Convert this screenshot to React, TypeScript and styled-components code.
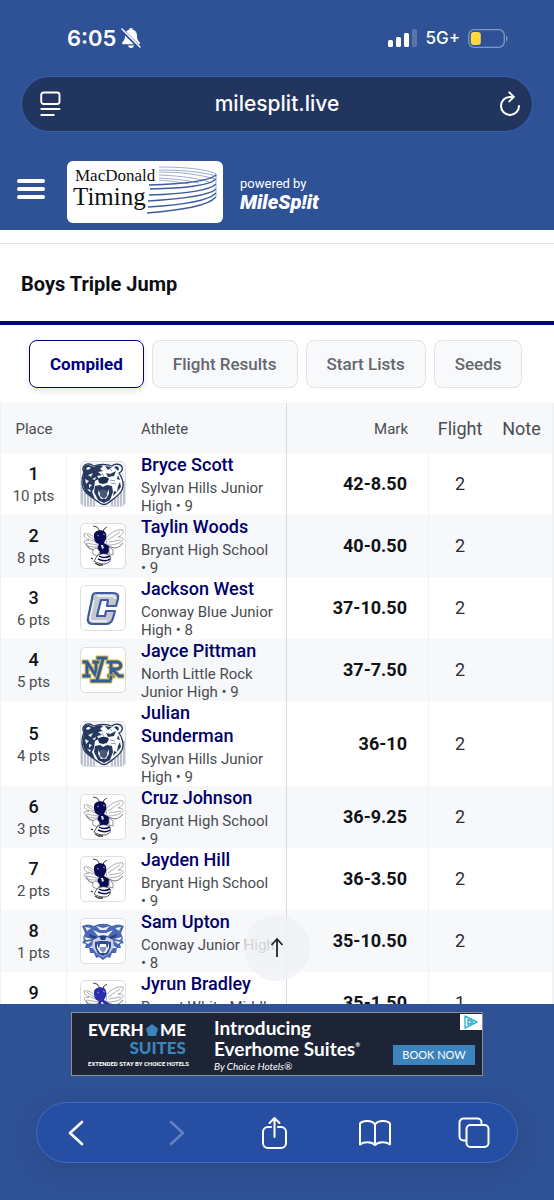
import React from "react";
import styled, { createGlobalStyle, css } from "styled-components";

const GlobalStyle = createGlobalStyle`
  *, *::before, *::after { box-sizing: border-box; }
  body { margin: 0; background: #2f5196; font-family: Roboto, "Liberation Sans", sans-serif; }
  button { font: inherit; padding: 0; border: 0; background: none; color: inherit; cursor: pointer; }
  svg { display: block; }
`;

const Screen = styled.div`
  display: flex;
  flex-direction: column;
  height: 100vh;
  background: #2f5196;
`;

/* ---------- status bar and address bar ---------- */

const StatusBar = styled.div`
  display: flex;
  align-items: center;
  justify-content: space-between;
  flex: none;
  height: 77px;
  padding: 0 46px 1px 67px;
  color: #fff;
  font-family: Inter, "Liberation Sans", sans-serif;
`;

const StatusGroup = styled.div<{ $gap: number }>`
  display: flex;
  align-items: center;
  gap: ${(p) => p.$gap}px;
`;

const Clock = styled.time`
  font-size: 22px;
  line-height: 28px;
  font-weight: 600;
`;

const Network = styled.span`
  font-size: 17px;
  line-height: 24px;
  font-weight: 500;
`;

const AddressBar = styled.div`
  display: flex;
  align-items: center;
  flex: none;
  height: 54px;
  margin: 0 22px;
  border-radius: 27px;
  background: #22355f;
  box-shadow: 0 0 0 1px #3560ae;
  color: #fff;
  font-family: Inter, "Liberation Sans", sans-serif;
`;

const AddressButton = styled.button<{ $end?: boolean }>`
  display: flex;
  align-items: center;
  justify-content: ${(p) => (p.$end ? "flex-end" : "flex-start")};
  width: 60px;
  height: 100%;
  padding: 0 11px 0 18px;
`;

const Address = styled.span`
  flex: 1;
  font-size: 21px;
  line-height: 28px;
  font-weight: 500;
  text-align: center;
`;

/* ---------- site header ---------- */

const SiteHeader = styled.header`
  display: flex;
  align-items: center;
  flex: none;
  height: 99px;
  padding: 22px 17px 0;
  color: #fff;
`;

const MenuButton = styled.button`
  display: flex;
  flex-direction: column;
  gap: 4px;
  width: 28px;
  margin-right: 22px;
  margin-bottom: 6px;
`;

const MenuLine = styled.span`
  height: 4px;
  border-radius: 2px;
  background: #fff;
`;

const TimingLogo = styled.a`
  display: block;
  width: 156px;
  height: 62px;
  border-radius: 6px;
  background: #fff;
`;

const Powered = styled.div`
  display: flex;
  flex-direction: column;
  margin-left: 17px;
  padding-top: 6px;
  font-size: 13px;
  line-height: 15px;
`;

const MileSplit = styled.span`
  font-size: 20px;
  line-height: 22px;
  font-weight: 900;
  font-style: italic;
`;

/* ---------- results ---------- */

const Frame = styled.div`
  position: relative;
  flex: 1;
  min-height: 0;
  display: flex;
`;

const Content = styled.main`
  flex: 1;
  overflow-y: auto;
  scrollbar-width: none;
  background: #fff;
`;

const TitleBar = styled.div`
  margin-top: 13px;
  padding: 28px 21px 24px;
  border-top: 1px solid #e2e3e6;
  border-bottom: 4px solid #000080;
`;

const Title = styled.h1`
  margin: 0;
  font-size: 20px;
  line-height: 25px;
  font-weight: 700;
  color: #0d0e12;
`;

const Tabs = styled.nav`
  display: flex;
  gap: 8px;
  padding: 15px 29px;
`;

const Tab = styled.button<{ $active?: boolean }>`
  height: 48px;
  padding: 0 20px;
  border: 1px solid #e1e3e7;
  border-radius: 8px;
  background: #f8f9fb;
  color: #65676d;
  font-size: 17px;
  line-height: 24px;
  font-weight: 500;
  white-space: nowrap;
  ${(p) =>
    p.$active &&
    css`
      border-color: #000080;
      background: #fff;
      color: #000080;
      font-weight: 700;
      box-shadow: 0 3px 6px rgba(0, 0, 60, 0.1);
    `}
`;

const Table = styled.table`
  width: 100%;
  table-layout: fixed;
  border-collapse: separate;
  border-spacing: 0;
  border-left: 1px solid #f0f1f3;
  border-right: 2px solid #f1f2f4;
  color: #4a4c51;
`;

const Col = styled.col<{ $width?: number }>`
  width: ${(p) => (p.$width ? `${p.$width}px` : "auto")};
`;

const HeadCell = styled.th<{ $align?: string; $large?: boolean }>`
  height: 50px;
  padding: 2px 0 0;
  background: #f7f8fa;
  font-size: ${(p) => (p.$large ? 18 : 15)}px;
  line-height: 20px;
  font-weight: 400;
  text-align: ${(p) => p.$align ?? "center"};
`;

const AthleteHead = styled(HeadCell)`
  padding-left: 74px;
  border-right: 1px solid #d9dadd;
`;

const MarkHead = styled(HeadCell)`
  padding-right: 21px;
`;

const Row = styled.tr`
  &:nth-child(even) { background: #f7f8fa; }
`;

const Cell = styled.td`
  padding: 0;
  border-right: 1px solid #f0f1f3;
  text-align: center;
  font-size: 18px;
  line-height: 22px;

  &:nth-child(n + 4) { border-right: 0; }
`;

const PlaceCell = styled(Cell)`
  padding-top: 2px;
`;

const Place = styled.strong`
  display: block;
  color: #111216;
  font-size: 18px;
  font-weight: 500;
`;

const Points = styled.span`
  display: block;
  font-size: 15px;
`;

const AthleteCell = styled(Cell)`
  padding: 0 8px 0 13px;
  border-right-color: #d9dadd;
  text-align: left;
`;

const Athlete = styled.div`
  display: flex;
  align-items: center;
  gap: 15px;
`;

const Badge = styled.span`
  flex: none;
  width: 46px;
  height: 46px;
  border: 1px solid #dedfe3;
  border-radius: 5px;
  background: #fff;
  overflow: hidden;
`;

const Name = styled.a`
  display: block;
  margin-bottom: 3px;
  color: #000069;
  font-size: 18px;
  line-height: 23px;
  font-weight: 500;
  text-decoration: none;
`;

const School = styled.div`
  font-size: 15px;
  line-height: 18px;
`;

const MarkCell = styled(Cell)`
  padding-right: 21px;
  color: #111216;
  font-weight: 700;
  text-align: right;
`;

const FlightCell = styled(Cell)`
  color: #2b2d31;
`;

const ToTop = styled.button`
  position: absolute;
  bottom: 23px;
  left: 50%;
  display: grid;
  place-items: center;
  width: 66px;
  height: 66px;
  margin-left: -33px;
  border-radius: 50%;
  background: rgba(240, 241, 247, 0.82);
`;

/* ---------- advert and browser toolbar ---------- */

const Footer = styled.footer`
  flex: none;
  padding: 8px 0 37px;
`;

const Advert = styled.aside`
  position: relative;
  display: flex;
  width: 412px;
  height: 64px;
  margin: 0 auto 26px;
  padding: 4px 7px 2px 16px;
  border: 1px solid #8d8f93;
  background: #1d2436;
  color: #fff;
  font-family: Lato, "Liberation Sans", sans-serif;
`;

const Brand = styled.div`
  display: flex;
  flex-direction: column;
  width: 98px;
  margin-right: 28px;
  padding-top: 4px;
`;

const BrandName = styled.span`
  display: flex;
  align-items: center;
  justify-content: space-between;
  font-size: 17px;
  line-height: 18px;
  font-weight: 900;
`;

const BrandSuites = styled.span`
  color: #3c84bd;
  font-size: 17px;
  line-height: 17px;
  font-weight: 900;
  text-align: right;
`;

const BrandNote = styled.span`
  margin-top: 3px;
  font-family: Roboto, "Liberation Sans", sans-serif;
  font-size: 6px;
  line-height: 10px;
  font-weight: 700;
  white-space: nowrap;
`;

const AdCopy = styled.div`
  flex: 1;
  font-size: 19px;
  line-height: 21px;
  font-weight: 700;
  white-space: nowrap;
`;

const Reg = styled.small`
  font-size: 6px;
  line-height: 14px;
  vertical-align: top;
`;

const Byline = styled.div`
  font-size: 10px;
  line-height: 14px;
  font-style: italic;
  font-weight: 400;
`;

const BookNow = styled.button`
  align-self: flex-end;
  width: 82px;
  height: 20px;
  margin-bottom: 8px;
  background: #3c84bd;
  font-size: 11px;
  line-height: 20px;
`;

const AdChoices = styled.a`
  position: absolute;
  top: 1px;
  right: 0;
  display: grid;
  place-items: center;
  width: 22px;
  height: 16px;
  background: #fff;
`;

const Toolbar = styled.nav`
  display: flex;
  align-items: center;
  justify-content: space-between;
  height: 61px;
  margin: 0 36px;
  padding: 0 25px 0 21px;
  border: 1px solid #3c6dc4;
  border-radius: 31px;
  background: #264fa4;
  box-shadow: 0 6px 20px rgba(40, 60, 100, 0.35);
  color: #fff;
`;

const ToolButton = styled.button`
  display: grid;
  place-items: center;
  width: 36px;
  height: 44px;

  &:disabled { color: #6583c0; }
`;

/* ---------- school badges ---------- */

const Bear = () => (
  <svg width="44" height="44" viewBox="1 1 44 44" aria-label="Sylvan Hills bear">
    <rect x="1" y="1" width="44" height="44" fill="#f3f5f8" />
    <path
      d="M2 20v26M5 27v19M8 31v15M11 36v10M14 39v7M32 39v7M35 36v10M38 31v15M41 27v19M44 20v26"
      stroke="#a5acbd"
      strokeWidth="1.400"
    />
    <path
      d="M4 11C1 7 5 2 9 3c2 0 3 1 5 2 5-2 13-2 18 0 3-3 9-2 10 1 1 3-1 5-3 6 4 6 5 12 3 17-3 6-9 9-14 13-2 2-6 2-8 0C14 38 7 34 4 29 1 23 2 16 4 11z"
      fill="#fff"
      stroke="#27395f"
      strokeWidth="1.300"
    />
    <path
      d="M4 11C2 7 5 3 9 4l5 2c3-2 7-2 9-1l-3 3 3 2-5 1 4 3-5 1 2 3-4 2-1 7-2 4 3 7C10 35 5 32 4 27c-2-5-1-11 0-16z"
      fill="#27395f"
    />
    <path d="M6 8c1-3 4-2 5-1L8 9zM8 14l5-2-2 4zM5 18l4 2-3 3zM9 23l3 1-3 3zM12 18l4-2-1 3zM7 28l4 1-1 2z" fill="#eef1f6" />
    <path d="M25 5l7 1-4 3zM34 6c4-2 6 1 4 4zM26 12l4 1 6-3-2 5-6 1zM38 14l2 5-3-1zM40 21l1 5-4 5 1-6zM37 31l-4 4 1-5z" fill="#27395f" />
    <path d="M18 18c3-3 9-3 11 0l-2 4-4 1-4-1z" fill="#1d2d52" />
    <path d="M15 25l5-1 3 2 4-2 5 1 1 6-3 8-6 3-6-3-4-8z" fill="#27395f" />
    <path d="M18 28l1 4 1-2h6l1 2 2-4 0 5-3 5h-5l-3-5z" fill="#dfe4ed" />
    <path d="M20 30c1-2 6-2 7 0v5l-3 3-4-3z" fill="#4a5878" />
    <path d="M30 19l5 1M31 22l5 1M30 8l2 2M22 12l2 4" stroke="#7f8ba4" strokeWidth="0.900" />
  </svg>
);

const Hornet = ({ body = "#0a0a55" }: { body?: string }) => (
  <svg width="44" height="44" viewBox="1 1 44 44" aria-label="Bryant hornet">
    <g fill="#fff" stroke="#8b8d91" strokeWidth="0.700">
      <path d="M17 18C13 12 8 10 4 11c0 3 2 5 5 6-2 1-5 0-5 2 3 5 9 6 15 4z" />
      <path d="M8 16l10 4M7 12l10 7M6 20l12 2" />
      <path d="M26 15c5-6 12-9 17-8 1 3-2 6-5 7 3 0 6 1 5 3-3 4-10 5-16 5z" />
      <path d="M28 17l12-8M29 19l12-2" />
      <path d="M6 21c3 6 9 7 13 4M29 23c5 3 10 2 14-3" fill="none" strokeWidth="1.200" />
    </g>
    <path d="M13 3l4 1 3 4M27 4l-3 2-1 3" fill="none" stroke="#303033" strokeWidth="0.900" />
    <path d="M14 12c0-4 6-6 10-4 3 2 3 7 1 10l-1 2 5 3 1 5-4 4-6-1-3-5 2-5c-4-1-5-4-5-9z" fill={body} />
    <path d="M17 12l2 1M23 11l2 1" stroke="#9da1c6" strokeWidth="0.900" />
    <path d="M21 22l2 0 1 3-2 1z" fill="#dfe2f0" />
    <path d="M17 25c-4 0-5 3-4 6l4 2 3-4zM29 24l4 3v5l-4-1z" fill="#fff" stroke="#76787d" strokeWidth="0.800" />
    <path d="M17 33c3-3 10-3 13 0 1 4 0 7-5 8-5 0-8-1-11-3z" fill="#fff" stroke="#303033" strokeWidth="0.800" />
    <path d="M19 33c3 2 7 2 11 0M18 36c4 2 9 2 12 0" fill="none" stroke={body} strokeWidth="1.500" />
    <path d="M13 36l-2-1M15 40l4 2h4" fill="none" stroke="#303033" strokeWidth="1.300" />
  </svg>
);

const BlockC = () => (
  <svg width="44" height="44" viewBox="1 1 44 44" aria-label="Conway C">
    <path
      d="M16 8h17c4 0 6 2 5 6l-2 7h-9l1-6h-7l-4 16h8l1-5h9l-2 7c-1 4-3 6-7 6H13c-4 0-6-2-5-6l4-19c0-3 1-6 4-6z"
      fill="#c4c8cd"
      stroke="#3d5ba5"
      strokeWidth="2.200"
      strokeLinejoin="round"
    />
    <path d="M17 11h15c2 0 3 1 3 3M14 15l-4 18c0 2 1 3 3 3h14" fill="none" stroke="#f4f5f7" strokeWidth="1.300" />
  </svg>
);

const monogramStrokes = [
  { color: "#dcb548", width: 4.8 },
  { color: "#2f5f9a", width: 2.8 },
];

const monogramLetters = [
  "M4 15h3l9 14V16M4 29h5M7 16v12M14 15h4M31 16v13M28 15h9c5 0 5 7 0 7h-5l7 7h3M29 29h4",
  "M18 11h8M23 12l-6 21M12 34h18l1-4",
];

const Monogram = () => (
  <svg width="44" height="44" viewBox="1 1 44 44" aria-label="North Little Rock monogram">
    {monogramLetters.map((d) =>
      monogramStrokes.map((s) => (
        <path key={d + s.color} d={d} fill="none" stroke={s.color} strokeWidth={s.width} strokeLinecap="square" />
      ))
    )}
  </svg>
);

const Wildcat = () => (
  <svg width="44" height="44" viewBox="1 1 44 44" aria-label="Conway wildcat">
    <path
      d="M2 8c4-2 8-2 12 0 5-3 13-3 18 0 4-2 8-2 12 0l-3 7 2 5-1 2 2 3-4 1 1 4-4 0-1 5-4 0-2 5-3-1-4 3-4-3-3 1-2-5-4 0-1-5-4 0 1-4-4-1 2-3-1-2 2-5z"
      fill="#4a68b4"
    />
    <path d="M5 9l6 1-4 3zM41 9l-6 1 4 3zM16 8l7 2 7-2-4 4h-6zM13 12l7 3h6l7-3-5 6-5-1-5 1z" fill="#e9edf6" />
    <path d="M9 16l8 3-2 2-5-2zM37 16l-8 3 2 2 5-2z" fill="#263f87" />
    <path d="M4 19l8 2-6 1zM42 19l-8 2 6 1zM5 24l7-1-4 3zM41 24l-7-1 4 3zM9 30l4-3v3zM37 30l-4-3v3z" fill="#fff" />
    <path d="M13 22l6-3h8l6 3 1 7-5 7-6 3-6-3-5-7z" fill="#c9cfde" />
    <path d="M19 18h8l-2 4h-4z" fill="#263f87" />
    <path d="M15 24l5-1h6l5 1v5l-3 7-5 2-5-2-3-7z" fill="#2e489b" />
    <path d="M17 25l2 6 1-5h6l1 5 2-6v5l-3 5h-6l-3-5z" fill="#fff" />
    <path d="M20 29h6v3l-3 3-3-3z" fill="#7f91c6" />
  </svg>
);

/* ---------- page icons ---------- */

const BellOff = () => (
  <svg width="20" height="22" viewBox="0 0 20 22" aria-label="Silent">
    <path
      d="M10 1c-1 0-1.600.6-1.700 1.400C5.400 3.200 4 5.600 4 8.500c0 4-1.200 5.300-2.500 6.600-.9.900-.5 2.100.6 2.100h15.800c1.100 0 1.500-1.200.6-2.100C17.200 13.800 16 12.500 16 8.500c0-2.900-1.400-5.300-4.300-6.100C11.600 1.600 11 1 10 1z"
      fill="#fff"
    />
    <path d="M7 18.500h6c-.4 1.700-1.500 2.500-3 2.500s-2.600-.8-3-2.500z" fill="#fff" />
    <path d="M0 2l19 19" stroke="#2f5196" strokeWidth="3.600" />
    <path d="M1 2l18 18" stroke="#fff" strokeWidth="1.500" strokeLinecap="round" />
  </svg>
);

const Signal = () => (
  <svg width="29" height="18" viewBox="0 0 29 18" aria-label="Signal">
    <rect x="0" y="11" width="5" height="7" rx="1.500" fill="#fff" />
    <rect x="8" y="8" width="5" height="10" rx="1.500" fill="#fff" />
    <rect x="16" y="4" width="5" height="14" rx="1.500" fill="#fff" />
    <rect x="24" y="0" width="5" height="18" rx="1.500" fill="#5874ab" />
  </svg>
);

const Battery = () => (
  <svg width="40" height="19" viewBox="0 0 40 19" aria-label="Battery low">
    <rect x="0.700" y="0.700" width="35.600" height="17.600" rx="5.500" fill="none" stroke="#8197c2" strokeWidth="1.300" />
    <rect x="2.800" y="3" width="10" height="13" rx="3" fill="#fdd840" />
    <path d="M38 6.500c2 .8 2 5.200 0 6z" fill="#8197c2" />
  </svg>
);

const ReaderIcon = () => (
  <svg width="21" height="26" viewBox="0 0 21 26" fill="none" stroke="#fff" strokeWidth="1.900" strokeLinecap="round">
    <rect x="1.200" y="1.500" width="18.300" height="11.500" rx="2.500" />
    <path d="M1.300 18h18.200M1.300 24h12.500" />
  </svg>
);

const ReloadIcon = () => (
  <svg width="22" height="26" viewBox="0 0 22 26" fill="none" stroke="#fff" strokeWidth="2" strokeLinecap="round" strokeLinejoin="round">
    <path d="M14.500 5.900H11a9 9 0 1 0 9 9" />
    <path d="M10.300 1.400l4.500 4.500-4.500 4.500" />
  </svg>
);

const tool = {
  fill: "none",
  stroke: "currentColor",
  strokeWidth: 2,
  strokeLinecap: "round" as const,
  strokeLinejoin: "round" as const,
};

const BackIcon = () => (
  <svg width="18" height="26" viewBox="0 0 18 26" {...tool} strokeWidth={2.6}>
    <path d="M15 2L3 13l12 11" />
  </svg>
);

const ForwardIcon = () => (
  <svg width="18" height="26" viewBox="0 0 18 26" {...tool} strokeWidth={2.4}>
    <path d="M4 2l12 11L4 24" />
  </svg>
);

const ShareIcon = () => (
  <svg width="28" height="34" viewBox="0 0 28 34" {...tool}>
    <path d="M10 11H7a5 5 0 0 0-5 5v11a5 5 0 0 0 5 5h13a5 5 0 0 0 5-5V16a5 5 0 0 0-5-5h-3M13.500 21V2M8.500 7l5-5 5 5" />
  </svg>
);

const BookIcon = () => (
  <svg width="34" height="28" viewBox="0 0 34 28" {...tool}>
    <path d="M17 5.500C14 1 5 1 2 4.500v21c4-3 11.500-3 15 .5 3.500-3.500 11-3.500 15-.5v-21C29 1 20 1 17 5.500zV26" />
  </svg>
);

const TabsIcon = () => (
  <svg width="32" height="32" viewBox="0 0 32 32" {...tool}>
    <path d="M7.500 23.500H5.500a4 4 0 0 1-4-4v-14a4 4 0 0 1 4-4h14a4 4 0 0 1 4 4v2" />
    <rect x="8.500" y="8" width="22" height="22" rx="4" />
  </svg>
);

const TimingMark = () => (
  <svg width="156" height="62" viewBox="0 0 156 62" aria-label="MacDonald Timing">
    <g fill="#111" fontFamily='"Liberation Serif", serif'>
      <text x="8" y="20" fontSize="17">MacDonald</text>
      <text x="6" y="44" fontSize="25">Timing</text>
    </g>
    <g fill="none" stroke="#5a76b4" strokeWidth="0.600">
      <path d="M92 6c24 0 48 2 57 7v3M92 9c24 0 44 2 57 6M92 11c24 0 42 3 56 7M92 14c22 1 38 3 50 7M92 17c14 1 28 2 40 5M92 19c12 1 20 2 30 4" />
      <path d="M149 13v23" />
    </g>
    <g fill="none" stroke="#3c5c9f" strokeWidth="1.300">
      <path d="M82 24c34-1 60-4 67-10" />
      <path d="M83 28c34-1 59-3 66-10" />
      <path d="M82 34c34-1 60-4 67-11" />
      <path d="M81 40c34-2 61-5 68-12" />
      <path d="M81 46c34-2 61-6 68-14" />
      <path d="M80 52c35-3 61-7 69-16" />
    </g>
  </svg>
);

/* ---------- data ---------- */

const tabs = ["Compiled", "Flight Results", "Start Lists", "Seeds"];

const results = [
  { pts: 10, name: "Bryce Scott", school: "Sylvan Hills Junior High", grade: 9, mark: "42-8.50", flight: 2, badge: <Bear /> },
  { pts: 8, name: "Taylin Woods", school: "Bryant High School", grade: 9, mark: "40-0.50", flight: 2, badge: <Hornet /> },
  { pts: 6, name: "Jackson West", school: "Conway Blue Junior High", grade: 8, mark: "37-10.50", flight: 2, badge: <BlockC /> },
  { pts: 5, name: "Jayce Pittman", school: "North Little Rock Junior High", grade: 9, mark: "37-7.50", flight: 2, badge: <Monogram /> },
  { pts: 4, name: "Julian Sunderman", school: "Sylvan Hills Junior High", grade: 9, mark: "36-10", flight: 2, badge: <Bear /> },
  { pts: 3, name: "Cruz Johnson", school: "Bryant High School", grade: 9, mark: "36-9.25", flight: 2, badge: <Hornet /> },
  { pts: 2, name: "Jayden Hill", school: "Bryant High School", grade: 9, mark: "36-3.50", flight: 2, badge: <Hornet /> },
  { pts: 1, name: "Sam Upton", school: "Conway Junior High", grade: 8, mark: "35-10.50", flight: 2, badge: <Wildcat /> },
  { pts: 0, name: "Jyrun Bradley", school: "Bryant White Middle School", grade: 8, mark: "35-1.50", flight: 1, badge: <Hornet body="#2a2fae" /> },
];

export default function App() {
  return (
    <Screen>
      <GlobalStyle />
      <StatusBar>
        <StatusGroup $gap={5}>
          <Clock>6:05</Clock>
          <BellOff />
        </StatusGroup>
        <StatusGroup $gap={8}>
          <Signal />
          <Network>5G+</Network>
          <Battery />
        </StatusGroup>
      </StatusBar>
      <AddressBar>
        <AddressButton aria-label="Page menu"><ReaderIcon /></AddressButton>
        <Address>milesplit.live</Address>
        <AddressButton $end aria-label="Reload"><ReloadIcon /></AddressButton>
      </AddressBar>

      <SiteHeader>
        <MenuButton aria-label="Menu">
          <MenuLine />
          <MenuLine />
          <MenuLine />
        </MenuButton>
        <TimingLogo href="#"><TimingMark /></TimingLogo>
        <Powered>
          powered by
          <MileSplit>MileSp!it</MileSplit>
        </Powered>
      </SiteHeader>

      <Frame>
        <Content>
          <TitleBar>
            <Title>Boys Triple Jump</Title>
          </TitleBar>
          <Tabs>
            {tabs.map((t, i) => (
              <Tab key={t} $active={i === 0}>{t}</Tab>
            ))}
          </Tabs>
          <Table>
            <colgroup>
              <Col $width={66} />
              <Col $width={220} />
              <Col />
              <Col $width={62} />
              <Col $width={61} />
            </colgroup>
            <thead>
              <tr>
                <HeadCell>Place</HeadCell>
                <AthleteHead $align="left">Athlete</AthleteHead>
                <MarkHead $align="right">Mark</MarkHead>
                <HeadCell $large>Flight</HeadCell>
                <HeadCell $large>Note</HeadCell>
              </tr>
            </thead>
            <tbody>
              {results.map((r, i) => (
                <Row key={r.name}>
                  <PlaceCell>
                    <Place>{i + 1}</Place>
                    <Points>{r.pts} pts</Points>
                  </PlaceCell>
                  <AthleteCell>
                    <Athlete>
                      <Badge>{r.badge}</Badge>
                      <div>
                        <Name href="#">{r.name}</Name>
                        <School>{`${r.school} •\u00a0${r.grade}`}</School>
                      </div>
                    </Athlete>
                  </AthleteCell>
                  <MarkCell>{r.mark}</MarkCell>
                  <FlightCell>{r.flight}</FlightCell>
                  <Cell />
                </Row>
              ))}
            </tbody>
          </Table>
        </Content>
        <ToTop aria-label="Back to top">
          <svg width="14" height="22" viewBox="0 0 14 22" fill="none" stroke="#222429" strokeWidth="1.800">
            <path d="M7 20V2M1.500 8L7 2l5.500 6" />
          </svg>
        </ToTop>
      </Frame>

      <Footer>
        <Advert>
          <Brand>
            <BrandName>
              EVERH
              <svg width="12" height="12" viewBox="0 0 13 13">
                <path d="M6.500 0L13 5l-2.300 8H2.300L0 5z" fill="#3c84bd" />
              </svg>
              ME
            </BrandName>
            <BrandSuites>SUITES</BrandSuites>
            <BrandNote>EXTENDED STAY BY CHOICE HOTELS</BrandNote>
          </Brand>
          <AdCopy>
            Introducing
            <br />
            Everhome Suites<Reg>®</Reg>
            <Byline>By Choice Hotels®</Byline>
          </AdCopy>
          <BookNow>BOOK NOW</BookNow>
          <AdChoices href="#" aria-label="Ad choices">
            <svg width="16" height="14" viewBox="0 0 16 14" fill="none" stroke="#35b2cf" strokeWidth="1.400" strokeLinejoin="round">
              <path d="M2 1l12 6-12 6zM5 4.500l5 2.500-5 2.500z" />
            </svg>
          </AdChoices>
        </Advert>
        <Toolbar aria-label="Browser">
          <ToolButton aria-label="Back"><BackIcon /></ToolButton>
          <ToolButton aria-label="Forward" disabled><ForwardIcon /></ToolButton>
          <ToolButton aria-label="Share"><ShareIcon /></ToolButton>
          <ToolButton aria-label="Bookmarks"><BookIcon /></ToolButton>
          <ToolButton aria-label="Tabs"><TabsIcon /></ToolButton>
        </Toolbar>
      </Footer>
    </Screen>
  );
}
